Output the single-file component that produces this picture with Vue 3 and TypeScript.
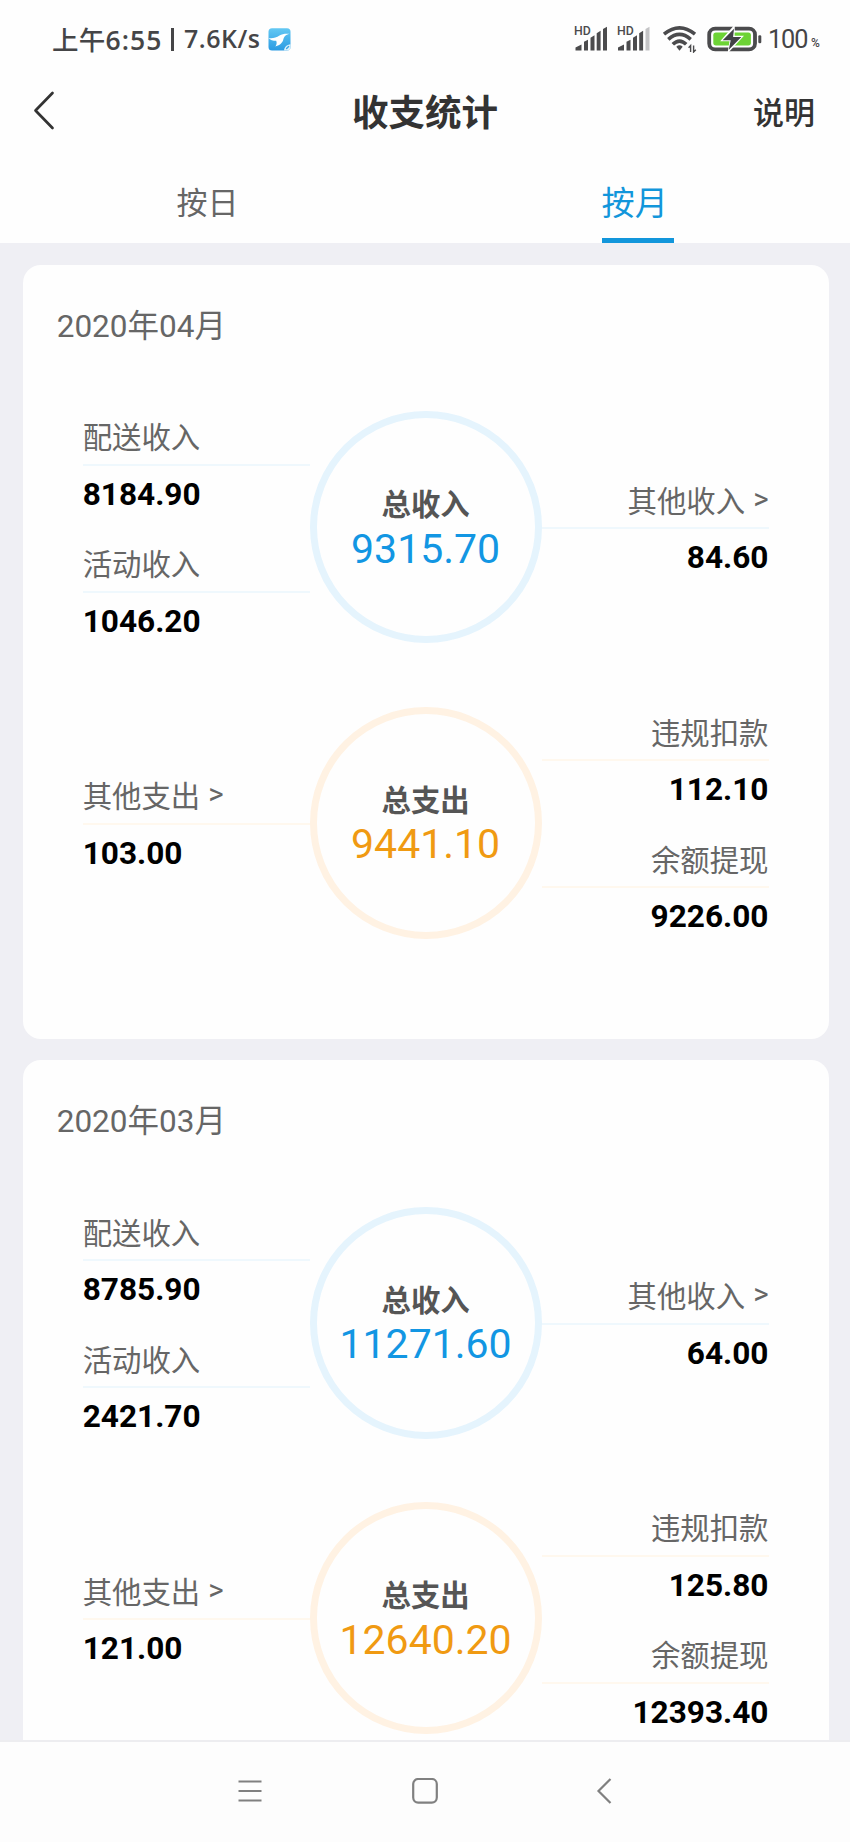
<script setup lang="ts">
interface Entry {
  label: string
  value: string
  link?: boolean
}
interface Group {
  kind: 'income' | 'expense'
  title: string
  total: string
  left: Entry[]
  right: Entry[]
}
interface Month {
  name: string
  groups: Group[]
}

const months: Month[] = [
  {
    name: '2020年04月',
    groups: [
      {
        kind: 'income',
        title: '总收入',
        total: '9315.70',
        left: [
          { label: '配送收入', value: '8184.90' },
          { label: '活动收入', value: '1046.20' },
        ],
        right: [{ label: '其他收入', value: '84.60', link: true }],
      },
      {
        kind: 'expense',
        title: '总支出',
        total: '9441.10',
        left: [{ label: '其他支出', value: '103.00', link: true }],
        right: [
          { label: '违规扣款', value: '112.10' },
          { label: '余额提现', value: '9226.00' },
        ],
      },
    ],
  },
  {
    name: '2020年03月',
    groups: [
      {
        kind: 'income',
        title: '总收入',
        total: '11271.60',
        left: [
          { label: '配送收入', value: '8785.90' },
          { label: '活动收入', value: '2421.70' },
        ],
        right: [{ label: '其他收入', value: '64.00', link: true }],
      },
      {
        kind: 'expense',
        title: '总支出',
        total: '12640.20',
        left: [{ label: '其他支出', value: '121.00', link: true }],
        right: [
          { label: '违规扣款', value: '125.80' },
          { label: '余额提现', value: '12393.40' },
        ],
      },
    ],
  },
]
</script>

<template>
  <div class="screen">
    <div class="status">
      <span class="clock"><span class="period">上午</span>6:55</span>
      <span class="sep"></span>
      <span class="speed">7.6K/s</span>
      <svg class="app-icon" width="23" height="23" viewBox="0 0 23 23">
        <defs>
          <linearGradient id="appBlue" x1="0" y1="0" x2="0" y2="1">
            <stop offset="0" stop-color="#63c8f3" />
            <stop offset="1" stop-color="#2a9ae2" />
          </linearGradient>
        </defs>
        <rect x="0.5" y="0.3" width="22" height="22.2" rx="3.5" fill="url(#appBlue)" />
        <path d="M0.5 10 C4 10.6 8 10 11.5 7.6 C14 6 17 5.4 21.5 5.8 C17.4 6.8 16 8.6 15.2 12 C14.2 15.6 11 17.3 7.3 18.6 C8.7 16.8 9 15 8.2 12.8 C5.2 12.8 2 12 0.5 10Z" fill="#fff" />
        <path d="M16 22.6 C16.2 19 18.6 16.6 22.6 16.2 V19.5 Q22.4 22.4 19.5 22.6Z" fill="#d9f0fb" />
        <path d="M18.6 20.4 l2 -2" stroke="#3ba5e5" stroke-width="1.4" stroke-linecap="round" />
      </svg>

      <svg class="signals" width="80" height="28" viewBox="0 0 80 28">
        <g fill="#4b4b4d">
          <text class="hd" x="0" y="10.4">HD</text>
          <path d="M1.5 25.5V22.5L7.5 19.4V25.5Z" />
          <path d="M10 25.5V16.8L14 14.8V25.5Z" />
          <path d="M16.5 25.5V12.8L20.5 10.3V25.5Z" />
          <path d="M22.7 25.5V8.3L26.6 5.8V25.5Z" />
          <path d="M29 25.5V4L33 1.8V25.5Z" />
          <text class="hd" x="43" y="10.4">HD</text>
          <path d="M44 25.5V22.5L50 19.4V25.5Z" />
          <path d="M52.5 25.5V16.8L56.5 14.8V25.5Z" />
          <path d="M59 25.5V12.8L63 10.3V25.5Z" />
          <path d="M65.2 25.5V8.3L69.1 5.8V25.5Z" />
          <path d="M71.5 25.5V4L75.5 1.8V25.5Z" fill="#c4c4c6" />
        </g>
      </svg>
      <svg class="wifi" width="36" height="28" viewBox="0 0 36 28">
        <g fill="none" stroke="#4b4b4d" stroke-width="3.6">
          <path d="M2 9.2 Q17.5 -3.6 33 9.2" />
          <path d="M6.3 14.3 Q17.5 4.6 28.7 14.3" />
          <path d="M10.8 19.3 Q17.5 12.8 24.2 19.3" />
        </g>
        <path d="M14.3 21.7 Q17.5 19 20.7 21.7 L17.5 25.7Z" fill="#4b4b4d" />
        <path d="M28.6 27V20.5L26.6 22.7M31.6 20.5V27L33.8 24.7" fill="none" stroke="#4b4b4d" stroke-width="1.4" />
      </svg>
      <svg class="battery" width="56" height="28" viewBox="0 0 56 28">
        <rect x="2.2" y="3.6" width="45.8" height="20.8" rx="6" fill="#fff" stroke="#4b4b4d" stroke-width="3.8" />
        <rect x="6.3" y="7.6" width="37.6" height="12.8" rx="2.6" fill="#6dd335" />
        <path d="M27.8 -0.5 L13.2 16.2 H22.5 L20.5 28.5 L37 10.8 H27.6Z" fill="#fff" />
        <path d="M27 3.7 L15.7 15.3 H23.7 L21.8 24.8 L34.4 12 H26.1Z" fill="#424246" />
        <rect x="51.3" y="10.2" width="3" height="8" rx="1.3" fill="#4b4b4d" />
      </svg>
      <span class="pct">100</span><span class="pct-sign">%</span>
    </div>

    <header class="bar">
      <svg class="back" width="24" height="40" viewBox="0 0 24 40">
        <path d="M20.5 2 L3.5 19.5 L20.5 37" fill="none" stroke="#333" stroke-width="2.7" stroke-linecap="round" stroke-linejoin="round" />
      </svg>
      <h1>收支统计</h1>
      <span class="help">说明</span>
    </header>

    <nav class="tabs">
      <div class="tab"><span>按日</span></div>
      <div class="tab active"><span>按月</span></div>
    </nav>

    <main class="list">
      <section v-for="m in months" :key="m.name" class="card">
        <h2>{{ m.name }}</h2>
        <div v-for="g in m.groups" :key="g.kind" class="group" :class="g.kind">
          <div class="side">
            <div v-for="e in g.left" :key="e.label" class="entry">
              <div class="label">{{ e.label }}<i v-if="e.link">&gt;</i></div>
              <div class="value">{{ e.value }}</div>
            </div>
          </div>
          <div class="ring">
            <div class="ring-title">{{ g.title }}</div>
            <div class="ring-total">{{ g.total }}</div>
          </div>
          <div class="side right">
            <div v-for="e in g.right" :key="e.label" class="entry">
              <div class="label">{{ e.label }}<i v-if="e.link">&gt;</i></div>
              <div class="value">{{ e.value }}</div>
            </div>
          </div>
        </div>
      </section>
    </main>

    <footer class="sysnav">
      <svg width="26" height="26" viewBox="0 0 26 26">
        <path d="M1.5 3.5H24.5M1.5 13H24.5M1.5 22.5H24.5" stroke="#808080" stroke-width="2.2" />
      </svg>
      <svg width="26" height="26" viewBox="0 0 26 26">
        <rect x="1.2" y="1" width="23.6" height="23.6" rx="5" fill="none" stroke="#808080" stroke-width="2.2" />
      </svg>
      <svg width="26" height="26" viewBox="0 0 26 26">
        <path d="M14.5 1 L2.5 13 L14.5 25" fill="none" stroke="#808080" stroke-width="2.2" />
      </svg>
    </footer>
  </div>
</template>

<style>
html,
body {
  margin: 0;
  overflow: hidden;
}
</style>

<style scoped>
.screen {
  width: 850px;
  height: 1842px;
  display: flex;
  flex-direction: column;
  overflow: hidden;
  background: #efeff4;
  font-family: Roboto, "Noto Sans CJK SC", sans-serif;
  color: #666;
}
.status {
  height: 78px;
  flex: none;
  display: flex;
  align-items: center;
  box-sizing: border-box;
  padding-left: 52px;
  background: #fefefe;
  color: #454547;
  white-space: nowrap;
  font-family: "Open Sans", "Noto Sans CJK SC", sans-serif;
}
.clock {
  width: 119px;
  margin-top: -2px;
  font-size: 26.5px;
  font-weight: 600;
  letter-spacing: 1px;
}
.period {
  font-weight: 500;
  letter-spacing: 0.3px;
}
.sep {
  width: 3px;
  height: 23px;
  background: #454547;
}
.speed {
  width: 84px;
  margin-left: 10px;
  margin-top: -2px;
  font-size: 25px;
  font-weight: 600;
  letter-spacing: 0.5px;
}
.signals {
  margin-left: 283px;
}
.wifi {
  margin-left: 8px;
}
.battery {
  margin-left: 9px;
}
.hd {
  font: 500 12.3px Roboto, sans-serif;
}
.pct {
  width: 43px;
  margin-left: 5px;
  font: 400 25.3px Roboto, sans-serif;
  letter-spacing: -1.1px;
}
.pct-sign {
  margin-top: 8px;
  font: 500 12px Roboto, sans-serif;
}
.bar {
  height: 84px;
  flex: none;
  display: grid;
  grid-template-columns: 1fr auto 1fr;
  align-items: start;
  padding: 0 35px 0 32px;
  background: #fefefe;
  color: #333;
}
.back {
  margin-top: 13px;
}
h1 {
  margin: 9px 0 0 3px;
  font-size: 36.5px;
  line-height: 54px;
  font-weight: 700;
}
.help {
  justify-self: end;
  margin-top: 9px;
  font-size: 31px;
  line-height: 54px;
  font-weight: 500;
}
.tabs {
  height: 81.3px;
  flex: none;
  display: flex;
  background: #fefefe;
}
.tab {
  flex: 1;
  display: flex;
  justify-content: center;
}
.tab span {
  box-sizing: border-box;
  width: 72px;
  padding-top: 16px;
  font-size: 31px;
  line-height: 52px;
}
.tab.active span {
  color: #1296db;
  font-size: 33.2px;
  border-bottom: 5.5px solid #1296db;
}
.list {
  flex: 1;
  min-height: 0;
  overflow: hidden;
  padding: 21.7px 21.5px 0 22.7px;
}
.card {
  box-sizing: border-box;
  height: 773.7px;
  margin-bottom: 21.8px;
  padding: 37px 60px 0;
  border-radius: 18px;
  background: #fefefe;
}
h2 {
  height: 109.3px;
  margin: 0 0 0 -26px;
  font-size: 31.5px;
  line-height: 50px;
  font-weight: 400;
}
.group {
  height: 232px;
  margin-bottom: 63.4px;
  display: grid;
  grid-template-columns: 1fr 232px 1fr;
  grid-template-rows: 232px;
  align-items: center;
}
.group.income {
  --tint: #e5f4fd;
  --line: #eff8fd;
  --accent: #1296e3;
}
.group.expense {
  --tint: #fff2e3;
  --line: #fff8ee;
  --accent: #f09a12;
}
.side {
  padding-top: 4px;
}
.entry {
  height: 127px;
}
.label {
  height: 63.5px;
  box-sizing: border-box;
  padding-top: 14px;
  border-bottom: 2px solid var(--line);
  font-size: 29.4px;
  line-height: 44px;
}
.label i {
  display: inline-block;
  margin-left: 8px;
  font-style: normal;
  transform: translateY(-3.5px);
}
.value {
  padding-top: 9px;
  color: #000;
  font-size: 31.6px;
  line-height: 40px;
  font-weight: 700;
}
.right {
  text-align: right;
}
.ring {
  height: 232px;
  box-sizing: border-box;
  padding-top: 66px;
  border: 7.4px solid var(--tint);
  border-radius: 50%;
  text-align: center;
}
.ring-title {
  color: #555;
  font-size: 29.4px;
  line-height: 42.5px;
  font-weight: 700;
}
.ring-total {
  color: var(--accent);
  font-size: 41px;
  line-height: 44px;
}
.sysnav {
  height: 102px;
  flex: none;
  box-sizing: border-box;
  display: grid;
  grid-template-columns: 175.5px 183.5px 26px;
  align-content: start;
  padding: 36px 0 0 236.5px;
  border-top: 2px solid #ededf0;
  background: #fdfdfd;
}
</style>
